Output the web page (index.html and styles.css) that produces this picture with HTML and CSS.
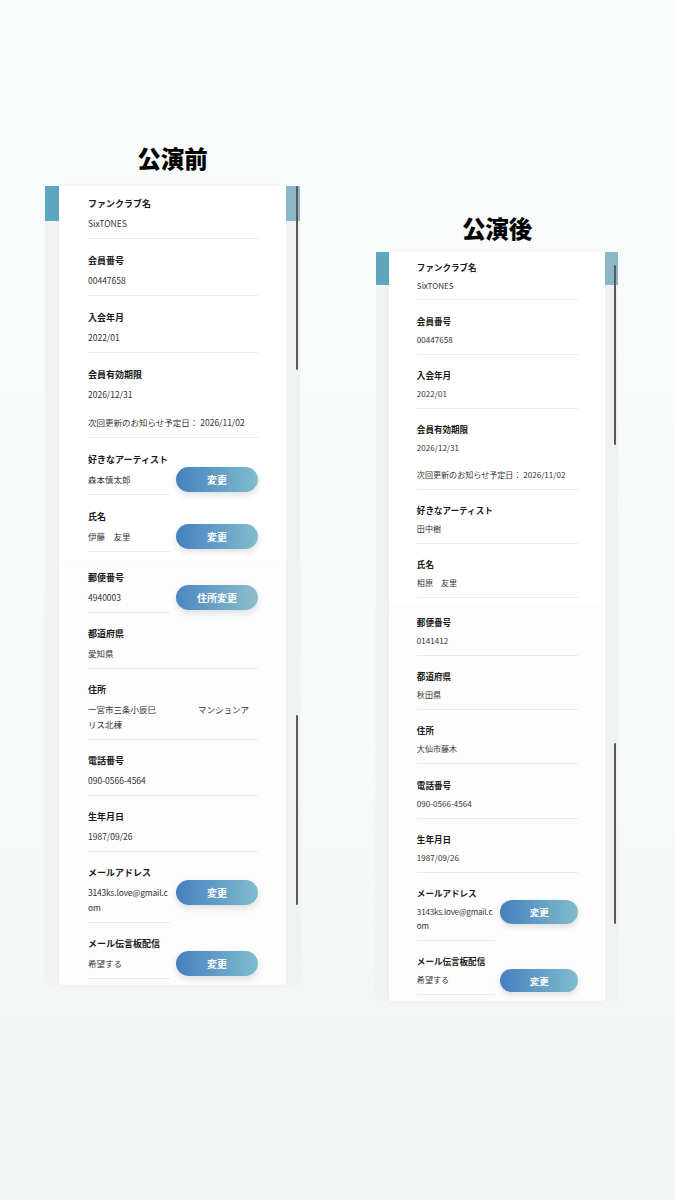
FILE: index.html
```html
<!DOCTYPE html>
<html lang="ja">
<head>
  <meta charset="UTF-8" />
  <meta name="viewport" content="width=device-width, initial-scale=1" />
  <title>会員情報 比較</title>
  <link rel="stylesheet" href="styles.css">
</head>
<body>
  <main class="compare">

    <!-- 公演前 -->
    <section class="col before">
      <h2 class="title">公演前</h2>
      <div class="phone">
        <div class="shot shot-top">
          <div class="gutter gutter-l"></div>
          <div class="card">
            <div class="row">
              <div class="field">
                <p class="label">ファンクラブ名</p>
                <p class="value">SixTONES</p>
              </div>
            </div>
            <div class="row">
              <div class="field">
                <p class="label">会員番号</p>
                <p class="value">00447658</p>
              </div>
            </div>
            <div class="row">
              <div class="field">
                <p class="label">入会年月</p>
                <p class="value">2022/01</p>
              </div>
            </div>
            <div class="row">
              <div class="field">
                <p class="label">会員有効期限</p>
                <p class="value">2026/12/31</p>
                <p class="value note">次回更新のお知らせ予定日： 2026/11/02</p>
              </div>
            </div>
            <div class="row">
              <div class="field narrow">
                <p class="label">好きなアーティスト</p>
                <p class="value">森本慎太郎</p>
              </div>
              <button class="btn">変更</button>
            </div>
            <div class="row">
              <div class="field narrow">
                <p class="label">氏名</p>
                <p class="value">伊藤　友里</p>
              </div>
              <button class="btn">変更</button>
            </div>
          </div>
          <div class="gutter gutter-r"><span class="thumb"></span></div>
        </div>

        <div class="shot shot-bottom">
          <div class="gutter gutter-l"></div>
          <div class="card">
            <div class="row">
              <div class="field narrow">
                <p class="label">郵便番号</p>
                <p class="value">4940003</p>
              </div>
              <button class="btn btn-light">住所変更</button>
            </div>
            <div class="row">
              <div class="field">
                <p class="label">都道府県</p>
                <p class="value">愛知県</p>
              </div>
            </div>
            <div class="row">
              <div class="field">
                <p class="label">住所</p>
                <p class="value">一宮市三条小辰巳<span class="redact"></span>マンションア<br>リス北棟</p>
              </div>
            </div>
            <div class="row">
              <div class="field">
                <p class="label">電話番号</p>
                <p class="value">090-0566-4564</p>
              </div>
            </div>
            <div class="row">
              <div class="field">
                <p class="label">生年月日</p>
                <p class="value">1987/09/26</p>
              </div>
            </div>
            <div class="row">
              <div class="field narrow">
                <p class="label">メールアドレス</p>
                <p class="value mail">3143ks.love@gmail.com</p>
              </div>
              <button class="btn">変更</button>
            </div>
            <div class="row">
              <div class="field narrow">
                <p class="label">メール伝言板配信</p>
                <p class="value">希望する</p>
              </div>
              <button class="btn">変更</button>
            </div>
          </div>
          <div class="gutter gutter-r"><span class="thumb"></span></div>
        </div>
      </div>
    </section>

    <!-- 公演後 -->
    <section class="col after">
      <h2 class="title">公演後</h2>
      <div class="phone">
        <div class="shot shot-top">
          <div class="gutter gutter-l"></div>
          <div class="card">
            <div class="row">
              <div class="field">
                <p class="label">ファンクラブ名</p>
                <p class="value">SixTONES</p>
              </div>
            </div>
            <div class="row">
              <div class="field">
                <p class="label">会員番号</p>
                <p class="value">00447658</p>
              </div>
            </div>
            <div class="row">
              <div class="field">
                <p class="label">入会年月</p>
                <p class="value">2022/01</p>
              </div>
            </div>
            <div class="row">
              <div class="field">
                <p class="label">会員有効期限</p>
                <p class="value">2026/12/31</p>
                <p class="value note">次回更新のお知らせ予定日： 2026/11/02</p>
              </div>
            </div>
            <div class="row">
              <div class="field">
                <p class="label">好きなアーティスト</p>
                <p class="value">田中樹</p>
              </div>
            </div>
            <div class="row">
              <div class="field">
                <p class="label">氏名</p>
                <p class="value">相原　友里</p>
              </div>
            </div>
          </div>
          <div class="gutter gutter-r"><span class="thumb"></span></div>
        </div>

        <div class="shot shot-bottom">
          <div class="gutter gutter-l"></div>
          <div class="card">
            <div class="row">
              <div class="field">
                <p class="label">郵便番号</p>
                <p class="value">0141412</p>
              </div>
            </div>
            <div class="row">
              <div class="field">
                <p class="label">都道府県</p>
                <p class="value">秋田県</p>
              </div>
            </div>
            <div class="row">
              <div class="field">
                <p class="label">住所</p>
                <p class="value">大仙市藤木</p>
              </div>
            </div>
            <div class="row">
              <div class="field">
                <p class="label">電話番号</p>
                <p class="value">090-0566-4564</p>
              </div>
            </div>
            <div class="row">
              <div class="field">
                <p class="label">生年月日</p>
                <p class="value">1987/09/26</p>
              </div>
            </div>
            <div class="row">
              <div class="field narrow">
                <p class="label">メールアドレス</p>
                <p class="value mail">3143ks.love@gmail.com</p>
              </div>
              <button class="btn">変更</button>
            </div>
            <div class="row">
              <div class="field narrow">
                <p class="label">メール伝言板配信</p>
                <p class="value">希望する</p>
              </div>
              <button class="btn">変更</button>
            </div>
          </div>
          <div class="gutter gutter-r"><span class="thumb"></span></div>
        </div>
      </div>
    </section>

  </main>
</body>
</html>
```

FILE: styles.css
```css
* {
  margin: 0;
  padding: 0;
  box-sizing: border-box;
}

html, body {
  height: 100%;
}

body {
  font-family: "Noto Sans CJK JP", "Noto Sans", sans-serif;
  color: #222;
  background: linear-gradient(#f9fafa, #f8f9f9 60%, #f3f4f4);
}

.compare {
  display: flex;
  align-items: flex-start;
  gap: 76px;
  padding-left: 45px;
}

.col {
  display: flex;
  flex-direction: column;
}

.before {
  width: 255px;
  padding-top: 143px;
}

.after {
  padding-top: 213px;
}

.title {
  height: 30px;
  line-height: 30px;
  text-align: center;
  font-size: 23.5px;
  font-weight: 900;
  color: #000;
  margin-bottom: 13px;
}

.after .title {
  margin-bottom: 9px;
}

/* right phone is a slightly smaller capture */
.after .phone {
  zoom: 0.95;
}

.phone {
  width: 255px;
}

.shot {
  display: flex;
}

.gutter {
  width: 14px;
  flex: none;
  background: #f1f2f2;
}

.gutter-r {
  position: relative;
}

.shot-top .gutter-l {
  background: linear-gradient(#5fa6c0 0 35px, #f1f2f2 35px);
}

.shot-top .gutter-r {
  background: linear-gradient(#8ab7c5 0 35px, #f1f2f2 35px);
}

.shot-bottom {
  box-shadow: 0 -2px 4px rgba(0, 0, 0, 0.03);
}

.thumb {
  position: absolute;
  right: 2px;
  width: 2px;
  border-radius: 1px;
  background: #5a5a5a;
}

.before .shot-top .thumb { top: 0; height: 184px; }
.before .shot-bottom .thumb { top: 151px; height: 190px; }
.after .shot-top .thumb { top: 14px; height: 189px; }
.after .shot-bottom .thumb { top: 144px; height: 190px; }

.card {
  flex: 1;
  background: #fff;
  padding: 0 28px 12px 29px;
  box-shadow: 0 0 6px rgba(0, 0, 0, 0.04);
}

.shot-bottom .card {
  background: #fdfdfd;
  padding-bottom: 6px;
}

.after .shot-top .card {
  padding-bottom: 9px;
}

.row {
  display: flex;
  align-items: flex-start;
  gap: 6px;
  padding-top: 14px;
}

.before .shot-bottom .row {
  padding-top: 13px;
}

.shot-top .row:first-child {
  padding-top: 10px;
}

.after .shot-top .row:first-child {
  padding-top: 8px;
}

.before .shot-bottom .row:first-child {
  padding-top: 6px;
}

.after .shot-bottom .row:first-child {
  padding-top: 9px;
}

.field {
  flex: 1;
  padding-bottom: 7px;
  border-bottom: 1px solid #ececec;
}

.field.narrow {
  flex: none;
  width: 82px;
}

.label {
  font-size: 9px;
  line-height: 16px;
  font-weight: 700;
  color: #1a1a1a;
  white-space: nowrap;
  margin-bottom: 4px;
}

.value {
  font-size: 8.5px;
  line-height: 15px;
  color: #333;
}

.value.note {
  margin-top: 13px;
  white-space: nowrap;
}

.value.mail {
  word-break: break-all;
  letter-spacing: -0.2px;
}

.redact {
  display: inline-block;
  width: 42px;
}

.btn {
  flex: none;
  width: 82px;
  height: 25px;
  margin-top: 15px;
  border: none;
  border-radius: 13px;
  background: linear-gradient(90deg, #4580bf, #80bccd);
  color: #fff;
  font-family: inherit;
  font-size: 10px;
  font-weight: 700;
  box-shadow: 0 3px 7px rgba(0, 0, 0, 0.13);
  cursor: pointer;
}

.btn-light {
  background: linear-gradient(90deg, #4d86c0, #8cbfcd);
}
```
